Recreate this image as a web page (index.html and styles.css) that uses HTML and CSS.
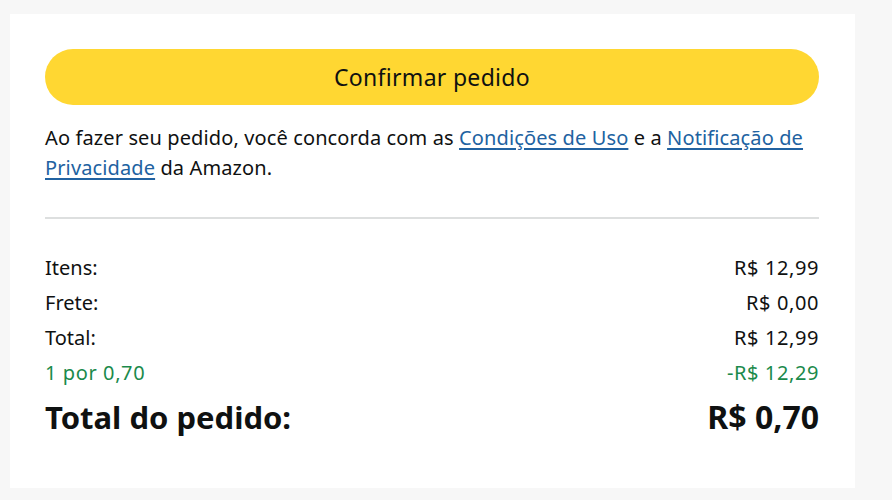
FILE: index.html
```html
<!DOCTYPE html>
<html lang="pt-BR">
<head>
<meta charset="utf-8">
<title>Confirmar pedido</title>
<link rel="stylesheet" href="styles.css">
</head>
<body>
<div class="card">
  <button class="confirm">Confirmar pedido</button>
  <p class="terms">Ao fazer seu pedido, você concorda com as <a href="#">Condições de Uso</a> e a <a href="#">Notificação de Privacidade</a> da Amazon.</p>
  <hr class="divider">
  <div class="summary">
    <div class="row"><span>Itens:</span><span class="val">R$ 12,99</span></div>
    <div class="row"><span>Frete:</span><span class="val">R$ 0,00</span></div>
    <div class="row"><span>Total:</span><span class="val">R$ 12,99</span></div>
    <div class="row promo"><span class="val">1 por 0,70</span><span class="val">-R$ 12,29</span></div>
    <div class="row grand"><span>Total do pedido:</span><span class="amount">R$ 0,70</span></div>
  </div>
</div>
</body>
</html>
```

FILE: styles.css
```css
html, body {
  margin: 0;
  padding: 0;
  background: #f7f7f7;
}
body {
  padding: 14px 0 0 10px;
  font-family: "Noto Sans", "DejaVu Sans", sans-serif;
  color: #0f1111;
}
.card {
  width: 845px;
  height: 474px;
  box-sizing: border-box;
  background: #ffffff;
  padding: 35px 36px 0 35px;
}
.confirm {
  display: block;
  width: 100%;
  height: 56px;
  border: none;
  border-radius: 28px;
  background: #ffd732;
  font-family: inherit;
  font-size: 23px;
  letter-spacing: 0.3px;
  color: #0f1111;
  padding: 0;
}
.terms {
  margin: 18px 0 0 0;
  font-size: 20px;
  letter-spacing: 0.12px;
  line-height: 30px;
}
.terms a {
  color: #2162a1;
  text-decoration: underline;
  text-underline-offset: 3px;
}
.divider {
  border: none;
  border-top: 2px solid #dddfdf;
  margin: 34px 0 0 0;
}
.summary {
  margin-top: 31px;
}
.row {
  display: flex;
  justify-content: space-between;
  font-size: 20px;
  line-height: 35px;
  height: 35px;
}
.row .val {
  letter-spacing: 0.6px;
}
.row .amount {
  font-size: 32px;
}
.row.promo {
  color: #1b8a4b;
}
.row.grand {
  font-size: 31px;
  font-weight: 700;
  margin-top: 7px;
  line-height: 40px;
}
```
